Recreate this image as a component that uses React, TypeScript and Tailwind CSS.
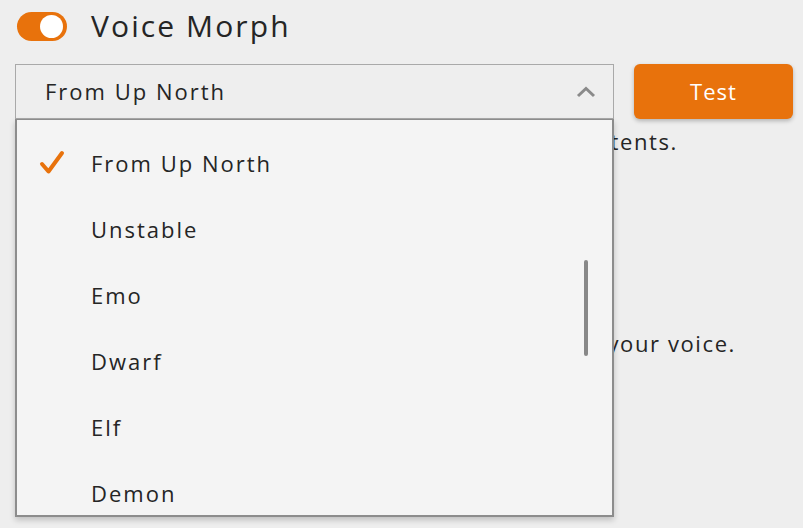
import React from 'react';

const voices = ['From Up North', 'Unstable', 'Emo', 'Dwarf', 'Elf', 'Demon'];

export default function App() {
    const selected = 'From Up North';

    return (
        <div className="h-[528px] w-[803px] overflow-hidden bg-[#eeeeee] pl-[15px] pr-[10px] text-[#252525] [font-family:'Open_Sans',sans-serif]">
            {/* Header */}
            <div className="flex h-[52px] items-center">
                <div className="ml-[2px] flex h-[29px] w-[50px] items-center justify-end rounded-full bg-[#e8720c] pr-[4px]">
                    <div className="h-[23px] w-[23px] rounded-full bg-white" />
                </div>
                <h1 className="ml-[24px] text-[30px] leading-none tracking-[2.1px]">Voice Morph</h1>
            </div>

            {/* Select + Test */}
            <div className="relative mt-[12px] flex">
                <div className="flex h-[55px] flex-1 items-center justify-between border border-[#a9a9a9] bg-[#eeeeee] pl-[29px] pr-[16px]">
                    <span className="text-[22px] tracking-[2px]">{selected}</span>
                    <svg width="22" height="14" viewBox="0 0 22 14" fill="none">
                        <path d="M3 11 L11 3.5 L19 11" stroke="#8a8a8a" strokeWidth="3" />
                    </svg>
                </div>
                <button className="ml-[20px] h-[55px] w-[159px] rounded-[6px] bg-[#e8720c] text-[22px] tracking-[1px] text-white shadow-[0_2px_4px_rgba(0,0,0,0.25)]">
                    Test
                </button>

                {/* Dropdown list */}
                <div className="absolute left-0 top-[55px] z-10 h-[398px] w-[599px] overflow-hidden border-2 border-t border-[#8c8c8c] bg-[#f4f4f4] pt-[10px] shadow-[0_3px_6px_rgba(0,0,0,0.2)]">
                    {voices.map((v) => (
                        <div key={v} className="flex h-[66px] items-center">
                            <div className="flex w-[70px] justify-center">
                                {v === selected && (
                                    <svg width="30" height="28" viewBox="0 0 30 28" fill="none">
                                        <path d="M5 15 L11.5 22.5 L25 4" stroke="#e8720c" strokeWidth="4" strokeLinecap="round" strokeLinejoin="round" />
                                    </svg>
                                )}
                            </div>
                            <span className="ml-[4px] text-[22px] tracking-[2px]">{v}</span>
                        </div>
                    ))}
                    <div className="absolute right-[24px] top-[140px] h-[96px] w-[4px] rounded-full bg-[#888888]" />
                </div>
            </div>

            {/* Description text behind the list */}
            <div className="mt-[7px] text-[22px] leading-[30px] tracking-[1.6px]">
                <p className="w-[663px] whitespace-nowrap text-right">Alters how you sound in all chat contents.</p>
                <p className="mt-[172px] w-[721px] whitespace-nowrap text-right">Pick a preset to transform your voice.</p>
            </div>
        </div>
    );
}
